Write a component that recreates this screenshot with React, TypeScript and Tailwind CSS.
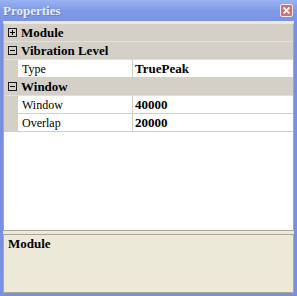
import React from 'react';

type Row =
  | { kind: 'cat'; label: string; open: boolean }
  | { kind: 'prop'; name: string; value: string };

const rows: Row[] = [
  { kind: 'cat', label: 'Module', open: false },
  { kind: 'cat', label: 'Vibration Level', open: true },
  { kind: 'prop', name: 'Type', value: 'TruePeak' },
  { kind: 'cat', label: 'Window', open: true },
  { kind: 'prop', name: 'Window', value: '40000' },
  { kind: 'prop', name: 'Overlap', value: '20000' },
];

const serif = { fontFamily: '"Liberation Serif", "Times New Roman", serif' };

function ExpandBox({ open }: { open: boolean }) {
  return (
    <svg width="9" height="9" viewBox="0 0 9 9" className="block">
      <rect x="0.5" y="0.5" width="8" height="8" fill="none" stroke="#1a1a1a" />
      <line x1="2" y1="4.5" x2="7" y2="4.5" stroke="#000" />
      {!open && <line x1="4.5" y1="2" x2="4.5" y2="7" stroke="#000" />}
    </svg>
  );
}

export default function App() {
  return (
    <div className="w-[297px] h-[296px] flex flex-col bg-[#7b8fe1] px-[3px] pb-[3px] leading-none" style={serif}>
      {/* Title bar */}
      <div className="h-[21px] -mx-[3px] flex items-center justify-between pl-[3px] pr-[4px] bg-gradient-to-b from-[#9ab2f2] via-[#7f9ae6] to-[#7a94e2]">
        <span className="text-[13px] font-bold text-[#e6ecfb] [text-shadow:1px_1px_0_#6a80c8]">
          Properties
        </span>
        <div className="w-[13px] h-[13px] rounded-[2px] border border-[#f2e6ea] bg-[#cf6f78] flex items-center justify-center">
          <svg width="7" height="7" viewBox="0 0 7 7">
            <path d="M0.5 0.5 L6.5 6.5 M6.5 0.5 L0.5 6.5" stroke="#fff" strokeWidth="1.8" />
          </svg>
        </div>
      </div>

      <div className="flex-1 flex flex-col bg-[#ece9d8]">
        {/* Grid */}
        <div className="mt-[2px] h-[208px] flex flex-col bg-white border border-[#aca899] border-t-[#ece9d8]">
          {rows.map((r, i) =>
            r.kind === 'cat' ? (
              <div key={i} className="h-[18px] flex items-center bg-[#d4d0c8] border-b border-[#e2dfd8]">
                <div className="w-[14px] flex justify-center pl-[2px]">
                  <ExpandBox open={r.open} />
                </div>
                <span className="pl-[3px] text-[13px] font-bold text-black">{r.label}</span>
              </div>
            ) : (
              <div key={i} className="h-[18px] flex">
                <div className="w-[14px] bg-[#d4d0c8]" />
                <div className="w-[115px] flex items-center pl-[4px] border-b border-r border-[#d4d0c8]">
                  <span className="text-[12px] text-black">{r.name}</span>
                </div>
                <div className="flex-1 flex items-center pl-[2px] border-b border-[#d4d0c8]">
                  <span className="text-[13px] font-bold text-black">{r.value}</span>
                </div>
              </div>
            ),
          )}
        </div>

        {/* Description */}
        <div className="mt-[3px] h-[59px] border border-[#aca899] bg-[#ece9d8] px-[4px] pt-[2px]">
          <div className="text-[13px] font-bold text-black">Module</div>
        </div>
      </div>
    </div>
  );
}
